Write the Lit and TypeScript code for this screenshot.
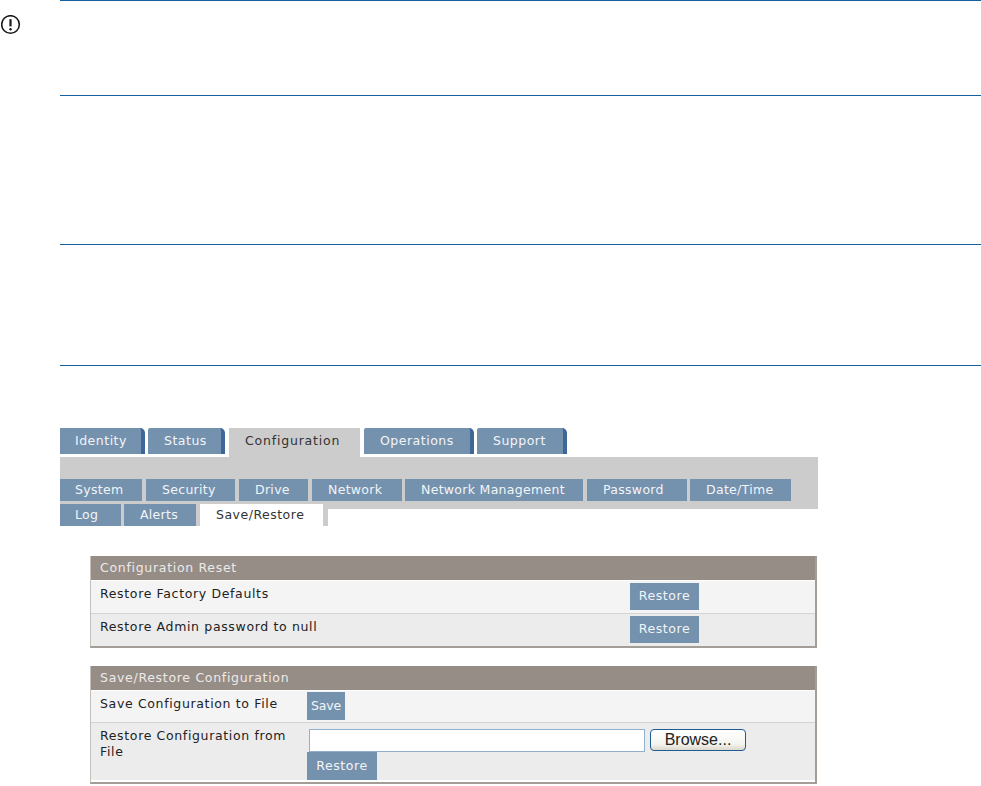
import { LitElement, html, css } from "lit";
import { customElement } from "lit/decorators.js";

@customElement("app-root")
export class AppRoot extends LitElement {
  static styles = css`
    :host { display: block; width: 981px; height: 786px; overflow: hidden; background: #fff; font-family: "DejaVu Sans", sans-serif; font-size: 12.5px; color: #222; }
    .notes { display: grid; grid-template-columns: 60px 1fr; }
    .icon { padding: 15px 0 0 1px; }
    .icon svg { display: block; }
    .rules { display: flex; flex-direction: column; }
    .rule { height: 1px; background: #14609f; }
    .g1 { height: 94px; } .g2 { height: 148px; } .g3 { height: 120px; }
    .nav { margin: 62px 0 0 60px; padding: 0; }
    .top { display: flex; height: 29px; align-items: flex-start; }
    .tab { height: 26px; box-sizing: border-box; background: #7491ae; color: #f2f5f8; display: flex; align-items: center; padding: 0 0 2px 16px; letter-spacing: .5px; margin-right: 3px; border-right: 4px solid #3d6796; border-top-right-radius: 5px; border-top-left-radius: 2px; }
    .tab.first { border-top-left-radius: 0; padding-left: 15px; }
    .tab.active { background: #ccc; color: #333; height: 29px; padding-bottom: 5px; border-right: 0; border-radius: 0; margin: 0 4px 0 1px; letter-spacing: .8px; }
    .band { width: 758px; height: 52px; background: #ccc; box-sizing: border-box; padding-top: 22px; }
    .row { display: flex; gap: 3px; height: 22px; }
    .sub { height: 22px; box-sizing: border-box; background: #7491ae; color: #f2f5f8; display: flex; align-items: center; padding: 0 0 2px 16px; letter-spacing: .3px; }
    .sub.lead { padding-left: 15px; }
    .row3 { width: 268px; margin-top: 3px; background: #ccc; }
    .sub.active { background: #fff; color: #333; margin-left: 1px; padding-left: 16px; letter-spacing: .5px; }
    .panel { box-sizing: border-box; width: 727px; margin-left: 90px; border-right: 2px solid #a39d98; border-bottom: 2px solid #a39d98; border-left: 1px solid #c4c0bc; }
    .p1 { margin-top: 47px; height: 92px; }
    .p2 { margin-top: 18px; height: 118px; }
    .head { height: 24px; background: #968d87; color: #eeeae7; padding-left: 9px; line-height: 23px; letter-spacing: .7px; margin-bottom: 1px; }
    .line { display: grid; box-sizing: border-box; background: #f4f4f4; color: #222; border-bottom: 1px solid #d4d4d4; padding-left: 9px; letter-spacing: .65px; }
    .line.alt { background: #ececec; border-bottom: 0; }
    .l1 { grid-template-columns: 530px auto; height: 33px; }
    .l1.alt { height: 32px; }
    .l2 { grid-template-columns: 207px auto; }
    .label { padding-top: 5px; line-height: 16px; padding-right: 8px; }
    .btn { background: #7491ae; color: #f2f5f8; display: flex; align-items: center; justify-content: center; padding-bottom: 2px; box-sizing: border-box; letter-spacing: .6px; height: 27px; width: 69px; margin-top: 2px; }
    .btn.save { width: 38px; height: 28px; margin-top: 1px; letter-spacing: -.2px; }
    .btn.restore2 { margin-top: 0; width: 70px; height: 28px; }
    .file { display: flex; align-items: flex-start; margin: 6px 0 0 2px; height: 23px; }
    .input { width: 336px; height: 23px; box-sizing: border-box; background: #fff; border: 1px solid #8fb0cf; }
    .browse { width: 96px; height: 22px; margin-left: 5px; box-sizing: border-box; border: 1px solid #1f5c94; border-radius: 4px; background: linear-gradient(#fff, #f4f4ee 70%, #dcd8cc); color: #222; display: flex; align-items: center; justify-content: center; font-family: "Liberation Sans", sans-serif; font-size: 16px; letter-spacing: 0; }
  `;

  render() {
    return html`
      <div class="notes">
        <div class="icon">
          <svg width="20" height="20" viewBox="0 0 20 20" fill="none" stroke="#1a1a1a">
            <circle cx="9.5" cy="9.5" r="8.8" stroke-width="1.6"></circle>
            <path d="M9.5 4.2v7.2" stroke-width="2.2"></path>
            <circle cx="9.5" cy="14.2" r="1.2" fill="#1a1a1a" stroke="none"></circle>
          </svg>
        </div>
        <div class="rules">
          <div class="rule"></div><div class="g1"></div>
          <div class="rule"></div><div class="g2"></div>
          <div class="rule"></div><div class="g3"></div>
          <div class="rule"></div>
        </div>
      </div>
      <div class="nav">
        <div class="top">
          <div class="tab first" style="width:85px">Identity</div>
          <div class="tab" style="width:77px">Status</div>
          <div class="tab active" style="width:131px">Configuration</div>
          <div class="tab" style="width:110px">Operations</div>
          <div class="tab" style="width:90px">Support</div>
        </div>
        <div class="band">
          <div class="row">
            <div class="sub lead" style="width:82px">System</div>
            <div class="sub" style="width:89px;margin-left:1px">Security</div>
            <div class="sub" style="width:69px;margin-left:1px">Drive</div>
            <div class="sub" style="width:90px;margin-left:1px">Network</div>
            <div class="sub" style="width:178px">Network Management</div>
            <div class="sub" style="width:100px;margin-left:1px">Password</div>
            <div class="sub" style="width:101px">Date/Time</div>
          </div>
          <div class="row row3">
            <div class="sub lead" style="width:61px">Log</div>
            <div class="sub" style="width:72px">Alerts</div>
            <div class="sub active" style="width:123px">Save/Restore</div>
          </div>
        </div>
      </div>
      <div class="panel p1">
        <div class="head">Configuration Reset</div>
        <div class="line l1">
          <div class="label">Restore Factory Defaults</div>
          <div class="btn">Restore</div>
        </div>
        <div class="line l1 alt">
          <div class="label">Restore Admin password to null</div>
          <div class="btn">Restore</div>
        </div>
      </div>
      <div class="panel p2">
        <div class="head">Save/Restore Configuration</div>
        <div class="line l2" style="height:32px">
          <div class="label">Save Configuration to File</div>
          <div class="btn save">Save</div>
        </div>
        <div class="line l2 alt">
          <div class="label">Restore Configuration from File</div>
          <div>
            <div class="file"><div class="input"></div><div class="browse">Browse...</div></div>
            <div class="btn restore2">Restore</div>
          </div>
        </div>
      </div>
    `;
  }
}
